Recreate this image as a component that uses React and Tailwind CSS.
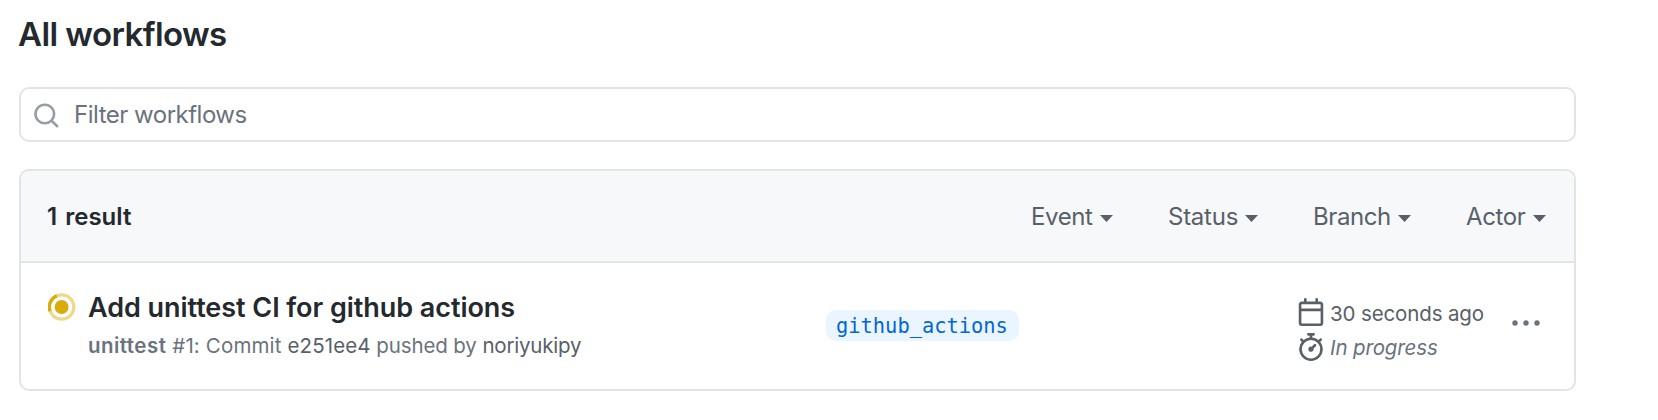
import React from "react";

const filters = [
  { label: "Event", cls: "w-[82px] mr-[55px]", text: "tracking-[-0.4px]" },
  { label: "Status", cls: "w-[90px] mr-[55px]", text: "tracking-[-0.25px]" },
  { label: "Branch", cls: "w-[98px] mr-[55px]", text: "tracking-[-0.4px]" },
  { label: "Actor", cls: "w-[80px]", text: "tracking-[-0.4px]" },
];

function Caret() {
  return (
    <svg className="mt-[3px] h-[7px] w-[13px] shrink-0" viewBox="0 0 13 7" fill="#586069">
      <path d="M0 0h13L6.500 7z" />
    </svg>
  );
}

function SearchIcon() {
  return (
    <svg className="mt-[2px] h-[26px] w-[26px] shrink-0" viewBox="0 0 26 26" fill="none" stroke="#959da5" strokeWidth="2.600" strokeLinecap="round">
      <circle cx="10.800" cy="11" r="9.300" />
      <path d="M17.600 17.800l5.600 5.400" />
    </svg>
  );
}

function ProgressIcon() {
  return (
    <svg className="mt-[30px] h-[28px] w-[28px] shrink-0" viewBox="0 0 28 28" fill="none">
      <circle cx="13.600" cy="14" r="12.200" stroke="#f0d88a" strokeWidth="3.200" />
      <path d="M2 18.200A12.200 12.200 0 0 1 8.800 2.800" stroke="#dbab0a" strokeWidth="3.200" />
      <circle cx="13.600" cy="14" r="7" fill="#dbab0a" />
    </svg>
  );
}

function CalendarIcon() {
  return (
    <svg className="h-[28px] w-[28px] shrink-0" viewBox="0 0 16 16" fill="#586069" fillRule="evenodd">
      <path d="M4.750 0a.75.75 0 0 1 .75.75V2h5V.75a.75.75 0 0 1 1.500 0V2h1.250c.966 0 1.750.784 1.750 1.750v10.500A1.750 1.750 0 0 1 13.250 16H2.750A1.750 1.750 0 0 1 1 14.250V3.750C1 2.784 1.784 2 2.750 2H4V.75A.75.75 0 0 1 4.750 0zm0 3.500h8.500a.25.25 0 0 1 .25.25V6h-11V3.750a.25.25 0 0 1 .25-.25h2zm-2.250 4v6.750c0 .138.112.25.25.25h10.500a.25.25 0 0 0 .25-.25V7.500h-11z" />
    </svg>
  );
}

function StopwatchIcon() {
  return (
    <svg className="mt-px h-[28px] w-[28px] shrink-0" viewBox="0 0 16 16" fill="#586069" fillRule="evenodd">
      <path d="M5.750.75A.75.75 0 0 1 6.500 0h3a.75.75 0 0 1 0 1.500h-.75v1l-.001.041a6.718 6.718 0 0 1 3.464 1.435l.007-.006.75-.75a.75.75 0 1 1 1.060 1.060l-.75.75-.006.007a6.750 6.750 0 1 1-10.548 0L2.720 5.030l-.75-.75a.75.75 0 0 1 1.060-1.060l.75.75.007.006A6.718 6.718 0 0 1 7.250 2.541a.756.756 0 0 1 0-.041v-1H6.500a.75.75 0 0 1-.75-.75zM8 14.500A5.250 5.250 0 1 0 8 4a5.250 5.250 0 0 0 0 10.500zm.389-6.700l1.330-1.330a.75.75 0 1 1 1.061 1.060L9.450 8.861A1.502 1.502 0 0 1 8 10.750a1.500 1.500 0 1 1 .389-2.950z" />
    </svg>
  );
}

export default function App() {
  return (
    <main className="h-[420px] w-full bg-white pl-[19px] pt-[14px] font-['Inter',sans-serif] text-[#24292e]">
      <h1 className="-ml-px h-[40px] text-[33px] font-semibold leading-[40px] tracking-[-0.58px]">All workflows</h1>
      <div className="mt-[33px] flex h-[55px] w-[1557px] items-center rounded-[10px] border-2 border-[#e1e4e8] pl-[13px]">
        <SearchIcon />
        <span className="ml-[14px] text-[24px] leading-[30px] tracking-[-0.5px] text-[#6a737d]">Filter workflows</span>
      </div>
      <section className="mt-[27px] w-[1557px] overflow-hidden rounded-[10px] border-2 border-[#e1e4e8]">
        <header className="flex h-[92px] items-center border-b-2 border-[#e1e4e8] bg-[#f6f8fa] pl-[26px] pr-[28px] pt-[2px]">
          <strong className="mr-auto text-[24px] font-semibold leading-[30px] [word-spacing:2px]">1 result</strong>
          {filters.map((f) => (
            <button key={f.label} className={"flex items-center justify-between text-[24px] leading-[30px] text-[#586069] " + f.cls}>
              <span className={f.text}>{f.label}</span>
              <Caret />
            </button>
          ))}
        </header>
        <div className="flex h-[126px] items-start pl-[27px]">
          <ProgressIcon />
          <div className="ml-[12px] mt-[28px] w-[738px] whitespace-nowrap">
            <h2 className="text-[27px] font-semibold leading-[34px] tracking-[-0.05px]">Add unittest CI for github actions</h2>
            <p className="mt-[8px] text-[20.5px] leading-[26px] text-[#6a737d]">
              <b className="font-semibold tracking-[0.45px]">unittest</b>
              <span className="tracking-[0.15px]"> #1: Commit </span>
              <span className="tracking-[0.1px] text-[#586069]">e251ee4</span>
              <span className="tracking-[-0.12px]"> pushed by </span>
              <span className="tracking-[-0.2px] text-[#586069]">noriyukipy</span>
            </p>
          </div>
          <span className="mt-[47px] h-[31px] w-[193px] rounded-[10px] bg-[#eaf5ff] pl-[10px] font-['DejaVu_Sans_Mono',monospace] text-[20.4px] leading-[32px] text-[#0366d6]">github_actions</span>
          <div className="ml-[278px] mt-[35px] w-[188px] text-[20.5px] leading-[31px] tracking-[-0.13px] text-[#586069]">
            <div className="flex h-[28px]">
              <CalendarIcon />
              <span className="ml-[5px] whitespace-nowrap">30 seconds ago</span>
            </div>
            <div className="mt-[6px] flex h-[28px]">
              <StopwatchIcon />
              <span className="ml-[5px] whitespace-nowrap italic text-[#6a737d]">In progress</span>
            </div>
          </div>
          <svg className="ml-[27px] mt-[57px] h-[6px] w-[28px] shrink-0" viewBox="0 0 28 6" fill="#6a737d">
            <circle cx="3" cy="3" r="2.700" />
            <circle cx="14" cy="3" r="2.700" />
            <circle cx="25" cy="3" r="2.700" />
          </svg>
        </div>
      </section>
    </main>
  );
}
